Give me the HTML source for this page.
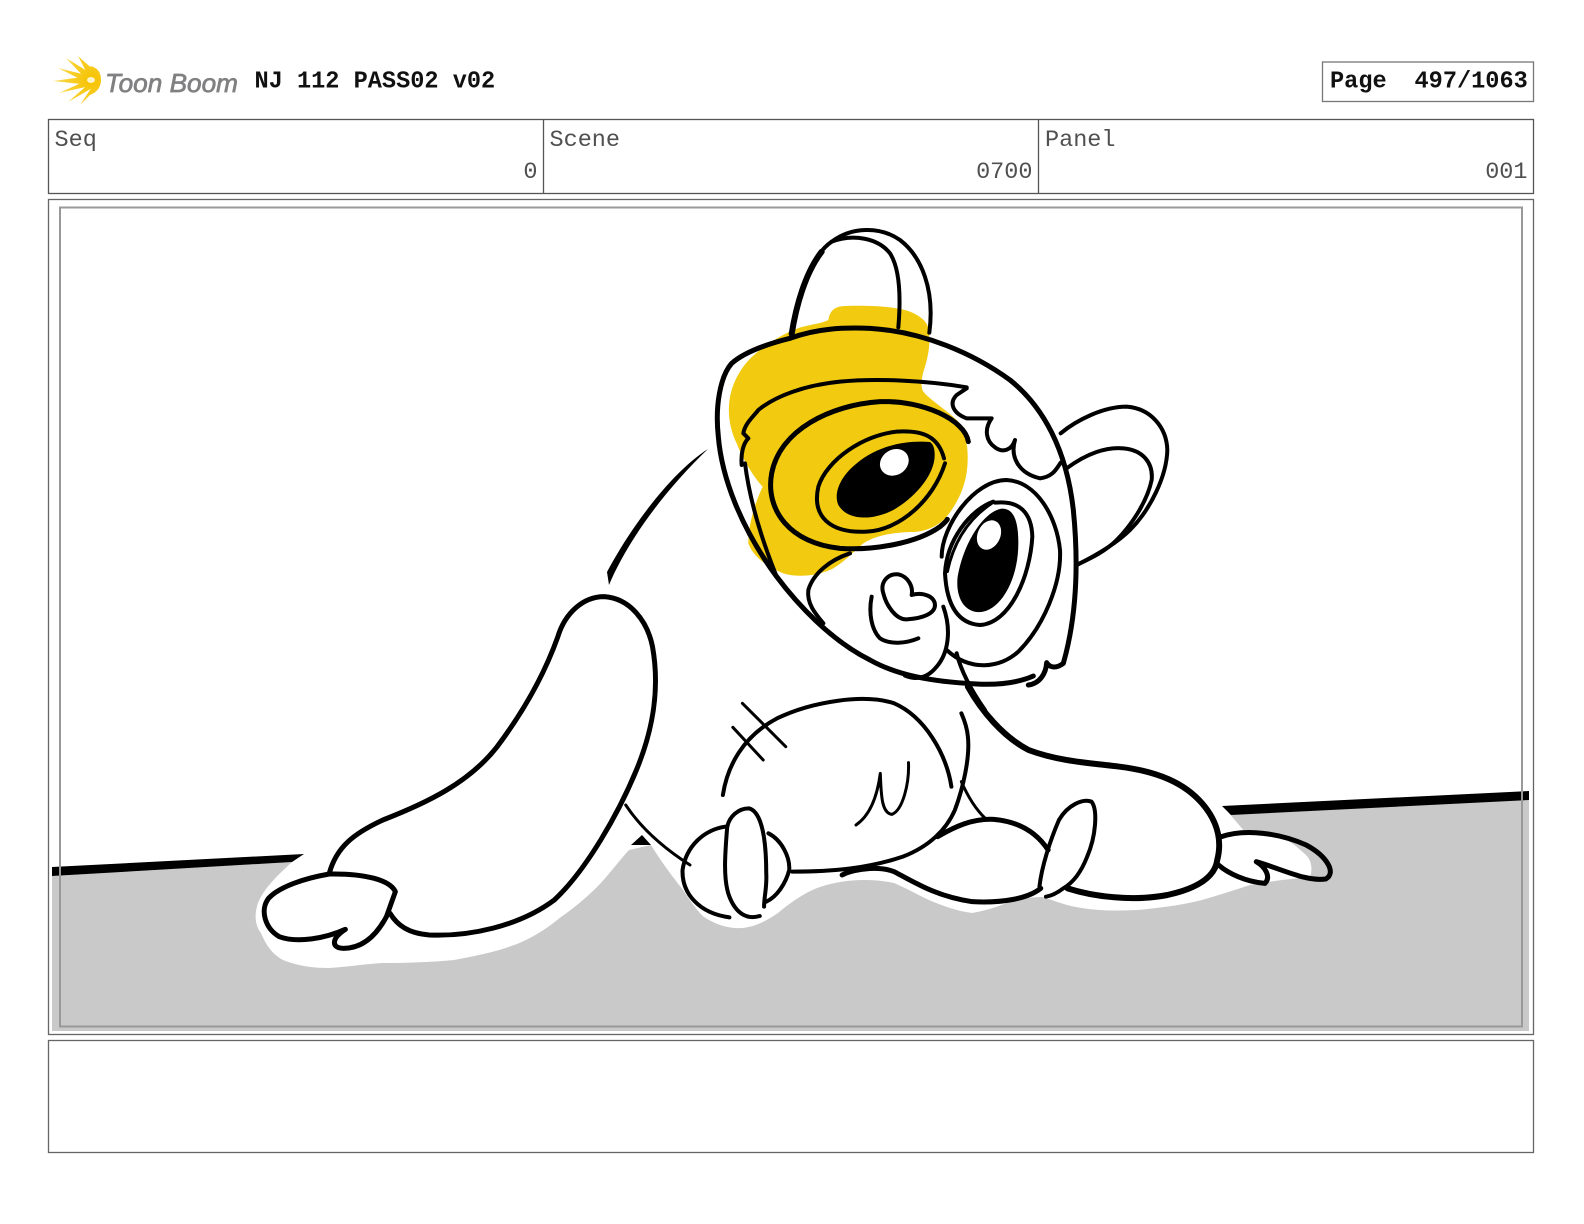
<!DOCTYPE html>
<html>
<head>
<meta charset="utf-8">
<style>
html,body{margin:0;padding:0;background:#fff;}
svg{display:block;}
.ink path{fill:none;stroke:#000;stroke-width:4;stroke-linecap:round;stroke-linejoin:round;vector-effect:non-scaling-stroke;}
.ink path.t{stroke-width:3;}
.ink path.k{stroke-width:5;}
.ink path.x{stroke-width:6;}
.ink path.f{fill:#000;stroke:none;}
.ink path.w{fill:#fff;stroke:none;}
.lbl{font-family:"Liberation Mono",monospace;font-size:23.5px;fill:#505050;}
.bld{font-family:"Liberation Mono",monospace;font-size:23.6px;font-weight:bold;fill:#111;}
</style>
</head>
<body>
<svg width="1584" height="1224" viewBox="0 0 1584 1224" xmlns="http://www.w3.org/2000/svg">
<defs>
<radialGradient id="sun" gradientUnits="userSpaceOnUse" cx="92" cy="80" r="46">
<stop offset="0" stop-color="#f6c200"/><stop offset="0.55" stop-color="#f8d030"/><stop offset="1" stop-color="#fbe89a"/>
</radialGradient>
</defs>
<rect width="1584" height="1224" fill="#fff"/>

<!-- logo -->
<g fill="url(#sun)">
<polygon points="53,81 90,76 90,85"/>
<polygon points="58,68 90,76 88,83"/>
<polygon points="66,58 92,74 87,80"/>
<polygon points="78,56 96,72 89,77"/>
<polygon points="59,93 90,79 90,86"/>
<polygon points="68,102 91,82 94,87"/>
<polygon points="80,105 94,84 98,87"/>
<circle cx="92" cy="80" r="8.500"/>
<path d="M90,66 C99,68 101,74 101,80 C101,86 98,92 90,95 C94,88 95,72 90,66Z"/>
</g>
<ellipse cx="91" cy="80" rx="4" ry="3" fill="#fff4c8"/>
<text x="105" y="92" font-family="'Liberation Sans',sans-serif" font-size="26" font-style="italic" fill="#808082" stroke="#808082" stroke-width="0.700" textLength="133" lengthAdjust="spacingAndGlyphs">Toon Boom</text>

<!-- title -->
<text class="bld" x="254.500" y="87.500">NJ 112 PASS02 v02</text>
<rect x="1322.500" y="62" width="211" height="39.500" fill="#fff" stroke="#777" stroke-width="1.300"/>
<text class="bld" x="1330" y="87.500">Page</text>
<text class="bld" x="1414.500" y="87.500">497/1063</text>

<!-- header cells -->
<rect x="48.500" y="119.500" width="1485" height="74" fill="#fff" stroke="#555" stroke-width="1.300"/>
<line x1="543.500" y1="119" x2="543.500" y2="193" stroke="#555" stroke-width="1.300"/>
<line x1="1038.500" y1="119" x2="1038.500" y2="193" stroke="#555" stroke-width="1.300"/>
<text class="lbl" x="54.500" y="146">Seq</text>
<text class="lbl" x="549.500" y="146">Scene</text>
<text class="lbl" x="1045" y="146">Panel</text>
<text class="lbl" x="537.500" y="178" text-anchor="end">0</text>
<text class="lbl" x="1032.500" y="178" text-anchor="end">0700</text>
<text class="lbl" x="1527.500" y="178" text-anchor="end">001</text>

<!-- panel -->
<rect x="48.500" y="199.500" width="1485" height="835" fill="#fff" stroke="#666" stroke-width="1.300"/>

<!-- ground -->
<path fill="#c9c9c9" d="M52,876 L292,862 C278,875 264,888 258,903 C254,915 255,925 261,933 C266,945 272,954 283,960 C298,966 312,968 329,968 C348,967 365,964 383,963 C408,963 432,962 454,960 C480,955 505,950 526,940 C540,933 550,926 561,917 C574,908 586,898 597,887 C608,876 618,862 629,850 L651,845 C660,860 672,876 683,890 C690,900 696,910 704,917 C716,925 730,929 742,928 C755,927 766,921 778,913 C790,903 805,892 820,887 C835,882 850,880 864,880 C875,880 885,881 894,883 C906,888 918,895 929,900 C943,906 957,911 972,913 C985,911 996,907 1007,903 C1018,899 1030,897 1042,897 C1053,900 1064,905 1076,907 C1096,911 1117,911 1137,910 C1160,908 1182,905 1202,900 C1219,895 1235,890 1250,885 C1270,881 1290,879 1310,877 C1313,868 1311,860 1306,855 C1298,848 1292,842 1285,840 C1272,836 1258,833 1245,832 L1228,812 L1529,800 L1529,1031 L52,1031 Z"/>
<!-- horizon lines -->
<path fill="#000" d="M52,867 L304,854 L292,862 L52,876 Z"/>
<path fill="#000" d="M1222,806 L1529,791 L1529,800 L1231,815 Z"/>
<path fill="#000" d="M631,845 L642,835 L651,845 Z"/>

<!-- inner frame -->
<rect x="60" y="207.500" width="1462" height="819" fill="none" stroke="#999" stroke-width="2"/>

<!-- head -->
<g class="ink" transform="translate(690,210) scale(0.33333)">
<path style="fill:#f2cb10;stroke:none" d="M415,330 C420,300 435,288 470,288 C520,286 580,288 620,295 C660,300 700,320 712,345 C722,380 720,420 705,470 C695,500 690,530 700,545 C720,570 770,600 805,635 C830,670 836,720 832,770 C828,820 810,870 770,920 C745,950 700,968 660,966 C610,968 560,975 520,1000 C490,1025 470,1050 430,1075 C390,1095 330,1105 280,1090 C230,1070 190,1040 175,1000 C175,950 190,890 218,830 C190,800 160,750 140,700 C115,650 110,590 125,540 C140,490 170,450 210,420 C240,395 300,360 340,350 C370,342 395,340 415,330 Z"/>
<!-- top ear -->
<path d="M305,372 C320,260 365,135 425,95 C485,50 570,48 630,90 C695,140 735,240 718,368"/>
<path d="M425,95 C490,70 565,85 600,130 C632,180 632,270 625,352"/>
<path class="x" d="M305,372 C318,290 345,190 395,125"/>
<!-- face outline -->
<path class="k" d="M300,385 C240,400 165,425 125,460 C90,500 75,590 85,680 C95,800 150,950 260,1100 C320,1180 420,1290 540,1350 C620,1395 720,1415 860,1422 C920,1425 980,1420 1030,1398"/>
<path class="k" d="M300,385 C380,355 460,352 540,355 C700,365 850,430 960,510 C1060,590 1130,720 1150,900 C1165,1050 1160,1200 1128,1330 L1120,1360 C1100,1375 1080,1375 1070,1358 C1068,1390 1050,1420 1015,1425"/>
<!-- brow / forehead -->
<path d="M830,532 C700,510 550,505 450,515 C350,525 260,555 205,600 C190,620 165,640 160,670 L175,685 C160,700 152,730 155,765"/>
<path d="M165,760 C175,840 200,950 258,1095"/>
<!-- hair curls -->
<path d="M830,535 L800,555 C775,580 790,610 830,625 L905,625 C880,660 890,695 915,712 C940,730 965,720 975,690 C960,740 985,790 1050,805 C1090,800 1100,775 1112,758"/>
<!-- left eye patch -->
<path class="k" d="M835,695 C825,630 700,570 570,575 C420,585 270,660 245,790 C225,900 300,1000 450,1015 C550,1022 680,1000 750,950 C762,940 768,935 772,928"/>
<!-- left eye -->
<path d="M762,745 C745,680 700,660 620,665 C520,675 410,750 385,830 C365,920 420,970 530,965 C630,960 730,870 765,760"/>
<path class="f" d="M720,696 C640,690 560,710 500,760 C450,800 430,850 445,885 C475,935 550,930 610,900 C680,860 735,790 734,735 C734,715 730,703 720,696 Z"/>
<ellipse cx="613" cy="757" rx="45" ry="38" transform="rotate(-32 613 757)" fill="#fff"/>
<!-- muzzle -->
<path d="M480,1030 C420,1050 370,1090 355,1140 C350,1180 375,1210 400,1240"/>
<!-- right eye patch -->
<path d="M755,1040 C755,950 850,810 950,810 C1040,815 1100,920 1110,1020 C1115,1120 1060,1250 985,1325 C930,1375 840,1385 770,1320"/>
<!-- right eye -->
<path d="M910,875 C840,900 770,990 765,1090 C770,1180 800,1240 870,1245 C960,1240 1020,1100 1027,980 C1025,910 990,870 915,878"/>
<path class="t" d="M905,880 C830,930 790,1000 772,1085"/>
<path class="f" d="M935,896 C880,905 820,1000 803,1100 C795,1170 830,1215 880,1205 C940,1190 985,1100 985,1000 C985,930 970,895 935,896 Z"/>
<ellipse cx="897" cy="975" rx="34" ry="46" transform="rotate(25 897 975)" fill="#fff"/>
<!-- nose -->
<path d="M625,1093 C590,1090 570,1120 580,1150 C590,1190 620,1230 650,1228 C700,1225 735,1210 735,1185 C735,1160 700,1145 665,1155 C670,1130 655,1100 625,1093 Z"/>
<!-- mouth -->
<path d="M545,1160 C535,1210 545,1260 570,1285 C600,1305 650,1300 685,1285"/>
<!-- centre line -->
<path d="M760,1190 C785,1260 775,1330 740,1370 C720,1395 690,1415 645,1397"/>
<!-- neck -->
<path d="M800,1330 C815,1390 850,1450 885,1500"/>
<!-- right ear -->
<path d="M1112,670 C1160,630 1240,590 1310,590 C1380,595 1430,650 1432,720 C1430,800 1380,900 1320,960 C1280,1000 1210,1040 1160,1065"/>
<path d="M1130,775 C1190,730 1250,710 1300,715 C1360,720 1390,760 1385,810 C1370,880 1320,950 1280,990 C1240,1030 1190,1050 1160,1065"/>
</g>

<!-- back arc -->
<g class="ink">
<path class="f" d="M708,449 C672,472 632,525 607,572 L609,585 C628,540 665,490 708,449 Z"/>
</g>

<!-- big leg + paw -->
<g class="ink" transform="translate(240,570) scale(0.35714,0.33333)">
<path class="k" d="M250,910 C270,830 320,790 400,750 C520,700 640,640 720,530 C790,430 850,320 890,200 C910,130 960,80 1020,80 C1090,85 1140,150 1155,230 C1175,350 1160,470 1110,600 C1060,730 970,900 880,990 C780,1070 640,1100 530,1095 C470,1090 440,1065 420,1030"/>
<path class="k" d="M250,912 C180,925 110,950 80,985 C55,1020 70,1075 110,1100 C160,1120 240,1105 295,1078 C255,1105 255,1135 290,1135 C340,1135 380,1100 410,1040 L435,965 C420,930 350,910 250,912 Z"/>
<path class="t" d="M1080,705 C1120,770 1180,830 1260,885"/>
</g>

<!-- body, arm, legs -->
<g class="ink" transform="translate(660,680) scale(0.43365,0.33333)">
<path d="M150,440 C100,450 60,500 52,570 C50,640 90,700 160,712"/>
<path d="M155,440 C160,410 180,385 205,385 C235,395 245,480 245,580 C247,620 240,650 240,680"/>
<path d="M155,440 C150,520 145,600 160,650 C175,700 200,720 230,708"/>
<path d="M250,460 C280,480 300,530 298,570 C290,610 270,650 245,665"/>
<path d="M305,575 C400,575 480,565 560,530 C620,500 660,450 680,390 C700,320 715,230 710,170 C708,140 700,115 695,100"/>
<path d="M145,345 C155,260 190,170 270,115 C350,65 470,40 540,70 C610,110 660,220 672,320"/>
<path class="t" d="M190,70 L290,200"/>
<path class="t" d="M168,142 L238,240"/>
<path class="t" d="M452,435 C480,410 500,360 508,280 C510,340 510,400 535,403 C560,390 575,310 573,248"/>
<path class="t" d="M695,305 C710,350 730,390 750,415"/>
<path class="k" d="M640,470 C680,440 720,415 770,418 C830,425 870,460 895,510"/>
<path class="k" d="M420,585 C440,570 500,555 540,575 C590,610 640,650 720,665 C790,670 850,655 878,625"/>
<path d="M875,620 C880,560 900,480 920,420 C940,375 975,355 995,365 C1010,390 1005,470 985,530 C970,580 950,610 930,625 C915,640 900,648 890,650"/>
<path class="x" d="M710,20 C740,90 790,170 850,210 C920,245 1000,250 1060,260 C1150,275 1210,310 1250,370 C1290,430 1295,490 1285,540 C1280,590 1240,625 1170,645 C1090,665 1000,650 940,625"/>
<path class="k" d="M1295,470 C1350,445 1430,460 1490,495 C1540,530 1560,580 1535,597 C1490,605 1440,570 1375,545 C1395,560 1410,590 1395,610 C1350,605 1310,580 1288,555"/>
</g>

<!-- comment box -->
<rect x="48.500" y="1040.500" width="1485" height="112" fill="#fff" stroke="#666" stroke-width="1.300"/>
</svg>
</body>
</html>
